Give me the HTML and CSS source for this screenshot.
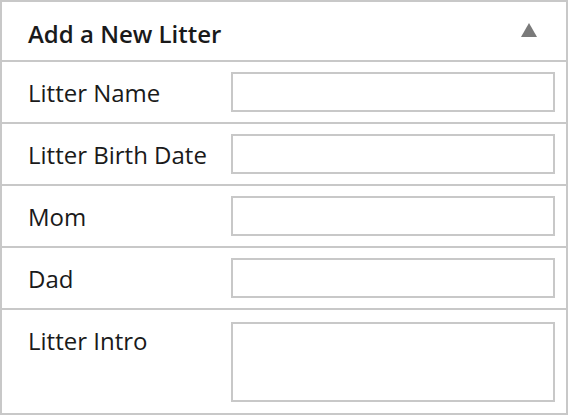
FILE: index.html
```html
<!DOCTYPE html>
<html lang="en">
<head>
  <meta charset="UTF-8">
  <title>Add a New Litter</title>
  <link rel="stylesheet" href="styles.css">
</head>
<body>
  <div class="litter-panel">
    <!-- Header -->
    <div class="panel-header">
      <span class="panel-title">Add a New Litter</span>
      <svg class="toggle-icon" viewBox="0 0 16 14" xmlns="http://www.w3.org/2000/svg">
        <path d="M8 0L16 14H0z" />
      </svg>
    </div>

    <!-- Fields -->
    <div class="field-row">
      <label class="field-label" for="litterName">Litter Name</label>
      <input class="field-input" type="text" id="litterName">
    </div>
    <div class="field-row">
      <label class="field-label" for="birthDate">Litter Birth Date</label>
      <input class="field-input" type="text" id="birthDate">
    </div>
    <div class="field-row">
      <label class="field-label" for="mom">Mom</label>
      <input class="field-input" type="text" id="mom">
    </div>
    <div class="field-row">
      <label class="field-label" for="dad">Dad</label>
      <input class="field-input" type="text" id="dad">
    </div>
    <div class="field-row field-row-tall">
      <label class="field-label" for="intro">Litter Intro</label>
      <textarea class="field-input field-textarea" id="intro"></textarea>
    </div>
  </div>
</body>
</html>
```

FILE: styles.css
```css
/* General */
body {
  margin: 0;
  padding: 0;
  background-color: #fff;
  font-family: 'Open Sans', 'Liberation Sans', sans-serif;
  color: #1a1a1a;
}

/* Panel */
.litter-panel {
  width: 564px;
  border: 2px solid #c8c8c8;
  background-color: #fff;
}

.panel-header {
  display: flex;
  align-items: center;
  justify-content: space-between;
  height: 58px;
  padding: 0 29px 0 26px;
}

.panel-title {
  font-size: 24px;
  font-weight: 600;
  margin-top: 4px;
}

.toggle-icon {
  width: 16px;
  height: 14px;
  fill: #7a7a7a;
  margin-top: -2px;
}

/* Rows */
.field-row {
  display: grid;
  grid-template-columns: 203px 1fr;
  align-items: center;
  height: 60px;
  padding: 0 11px 0 26px;
  border-top: 2px solid #c8c8c8;
}

.field-label {
  font-size: 24px;
}

.field-input {
  box-sizing: border-box;
  width: 100%;
  height: 40px;
  margin: 0;
  border: 2px solid #c8c8c8;
  background-color: #fff;
  outline: none;
  font-family: inherit;
}

.field-row-tall {
  height: auto;
  align-items: start;
  padding-top: 12px;
  padding-bottom: 11px;
}

.field-row-tall .field-label {
  padding-top: 2px;
}

.field-textarea {
  height: 80px;
  resize: none;
  display: block;
}
```
